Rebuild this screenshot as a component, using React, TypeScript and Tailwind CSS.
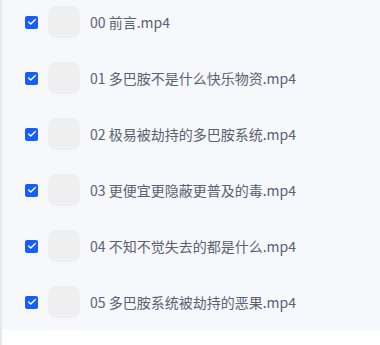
import { Check } from "lucide-react";

const files = [
  "00 前言.mp4",
  "01 多巴胺不是什么快乐物资.mp4",
  "02 极易被劫持的多巴胺系统.mp4",
  "03 更便宜更隐蔽更普及的毒.mp4",
  "04 不知不觉失去的都是什么.mp4",
  "05 多巴胺系统被劫持的恶果.mp4",
];

export default function App() {
  return (
    <div
      className="w-[380px] h-[345px] overflow-hidden bg-white border-l-2 border-[#e8e9ee]"
      style={{ fontFamily: '"Noto Sans CJK SC", sans-serif' }}
    >
      <div className="-mt-[6px] bg-[#f7f8fc]">
        {files.map((name, i) => (
          <div key={name} className="flex items-center h-[56px] pl-[23px] relative">
            <span className="w-[13px] h-[13px] rounded-[2px] bg-[#165dff] flex items-center justify-center">
              <Check size={10} strokeWidth={3.5} className="text-white" />
            </span>
            <div className="ml-[10px] w-[32px] h-[32px] rounded-[8px] bg-[#efefef]" />
            <span className="ml-[10px] text-[14px] text-[#5a6270]">{name}</span>
            {i < files.length - 1 && (
              <div className="absolute left-[30px] right-0 bottom-0 h-px bg-[#f3f4f9]" />
            )}
          </div>
        ))}
      </div>
    </div>
  );
}
